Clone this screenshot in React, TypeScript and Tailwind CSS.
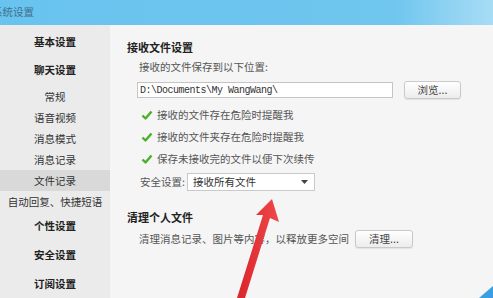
const CJK = "font-['Noto_Sans_CJK_SC','Noto_Sans',sans-serif]";

function Check() {
  return (
    <svg width="12" height="12" viewBox="0 0 12 12" className="shrink-0">
      <path d="M1.5 6.5 L4.5 9.5 L10.5 2.5" fill="none" stroke="#4caf2a" strokeWidth="2.4" strokeLinejoin="round" />
    </svg>
  );
}

function Btn({ label, w }: { label: string; w: string }) {
  return (
    <div
      className={`${w} h-[18px] flex items-center justify-center rounded-[3px] border border-[#c9c9c9] bg-gradient-to-b from-white to-[#ececec] text-[10.5px] text-[#444] shadow-[0_1px_1px_rgba(0,0,0,0.08)]`}
    >
      {label}
    </div>
  );
}

const subItems = ["常规", "语音视频", "消息模式", "消息记录", "文件记录", "自动回复、快捷短语"];

export default function App() {
  return (
    <div className={`relative w-[493px] h-[298px] overflow-hidden bg-[#f5f5f5] ${CJK}`}>
      {/* Title bar */}
      <div className="h-[25px] flex items-center bg-gradient-to-r from-[#68c3ee] via-[#6fc6ef] via-80% to-[#a7dcf5] overflow-hidden">
        <span className="ml-[-8px] text-[10.5px] text-[#3f6f8c] leading-none">系统设置</span>
      </div>

      <div className="flex h-[273px]">
        {/* Sidebar */}
        <div className="w-[110px] shrink-0 bg-[#ebebeb] pt-[3px] flex flex-col text-[10.5px] text-[#222]">
          <div className="h-[28px] flex items-center justify-center font-bold">基本设置</div>
          <div className="h-[28px] flex items-center justify-center font-bold">聊天设置</div>
          <div className="mt-[2px] flex flex-col">
            {subItems.map((s) => (
              <div
                key={s}
                className={`h-[21px] flex items-center justify-center whitespace-nowrap text-[#333] ${
                  s === "文件记录" ? "bg-[#d9d9d9]" : ""
                }`}
              >
                {s}
              </div>
            ))}
          </div>
          <div className="h-[28px] flex items-center justify-center font-bold">个性设置</div>
          <div className="h-[30px] flex items-center justify-center font-bold">安全设置</div>
          <div className="h-[28px] flex items-center justify-center font-bold">订阅设置</div>
        </div>

        {/* Content */}
        <div className="flex-1 pl-[17px] flex flex-col text-[10.5px] text-[#555]">
          <div className="mt-[14px] h-[16px] leading-[16px] font-bold text-[#222] text-[11px]">接收文件设置</div>
          <div className="mt-[4px] h-[16px] leading-[16px] pl-[12px]">接收的文件保存到以下位置:</div>
          <div className="mt-[6px] h-[18px] flex items-center pl-[10px]">
            <div className="w-[256px] h-[16px] flex items-center bg-white border border-[#c4c4c4] pl-[2px] font-['Liberation_Mono',monospace] text-[10px] tracking-[-0.5px] text-[#333]">
              D:\Documents\My WangWang\
            </div>
            <div className="ml-[11px]">
              <Btn label="浏览..." w="w-[57px]" />
            </div>
          </div>
          <div className="mt-[5px] flex flex-col pl-[14px]">
            {["接收的文件存在危险时提醒我", "接收的文件夹存在危险时提醒我", "保存未接收完的文件以便下次续传"].map((t) => (
              <div key={t} className="h-[22px] flex items-center gap-[4px]">
                <Check />
                <span>{t}</span>
              </div>
            ))}
          </div>
          <div className="mt-[2px] h-[20px] flex items-center pl-[13px]">
            <span>安全设置:</span>
            <div className="ml-[2px] w-[128px] h-[18px] flex items-center justify-between bg-white border border-[#c9c9c9] pl-[5px] pr-[6px] text-[#333]">
              <span>接收所有文件</span>
              <svg width="7" height="4" viewBox="0 0 7 4">
                <path d="M0 0 L7 0 L3.5 4 Z" fill="#444" />
              </svg>
            </div>
          </div>
          <div className="mt-[17px] h-[16px] leading-[16px] font-bold text-[#222] text-[11px]">清理个人文件</div>
          <div className="mt-[4px] h-[20px] flex items-center pl-[12px]">
            <span>清理消息记录、图片等内容，以释放更多空间</span>
            <div className="ml-[6px]">
              <Btn label="清理..." w="w-[58px]" />
            </div>
          </div>
        </div>
      </div>

      {/* Red annotation arrow */}
      <svg className="absolute left-0 top-0 pointer-events-none" width="493" height="298" viewBox="0 0 493 298">
        <defs>
          <linearGradient id="arr" x1="0" y1="0" x2="1" y2="0">
            <stop offset="0" stopColor="#d9262b" />
            <stop offset="1" stopColor="#f0484a" />
          </linearGradient>
        </defs>
        <polygon
          points="272,199 279,222 270,218 245,298 237,298 263,215 256,215"
          fill="url(#arr)"
        />
        {/* blue corner */}
        <polygon points="479,298 493,286 493,298" fill="#3a9ee0" />
      </svg>
    </div>
  );
}
